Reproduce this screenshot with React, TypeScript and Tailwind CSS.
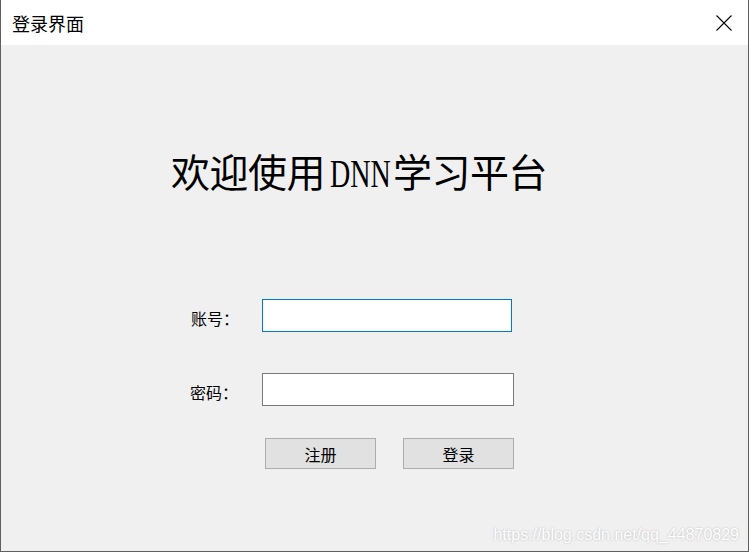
export default function App() {
  const cjk = { fontFamily: '"Noto Sans CJK SC", "Liberation Sans", sans-serif' };

  return (
    <div
      className="w-[749px] h-[552px] flex flex-col border-x border-b border-[#5f5f5f] bg-[#f0f0f0] overflow-hidden"
      style={cjk}
    >
      {/* title bar */}
      <div className="h-[45px] bg-white flex items-center justify-between pl-[11px] pr-[16px] shrink-0">
        <span className="text-[18px] leading-none text-black">登录界面</span>
        <svg width="16" height="16" viewBox="0 0 16 16" className="block">
          <path d="M0.5 0.5 L15.5 15.5 M15.5 0.5 L0.5 15.5" stroke="#000" strokeWidth="1.1" fill="none" />
        </svg>
      </div>

      {/* body */}
      <div className="relative flex-1">
        <h1 className="mt-[101px] h-[48px] pl-[170px] text-[39px] leading-[48px] font-normal text-black tracking-[-0.5px] whitespace-nowrap">
          欢迎使用
          <span className="inline-block w-[68px] pl-[5px] leading-none">
            <span
              className="inline-block origin-left scale-x-[0.72] tracking-normal"
              style={{ fontFamily: '"Liberation Serif", serif' }}
            >
              DNN
            </span>
          </span>
          学习平台
        </h1>

        <div className="mt-[105px] pl-[190px] flex flex-col">
          <div className="flex items-center">
            <label className="w-[71px] text-[16px] leading-none text-black mt-[4px]">账号：</label>
            <div className="w-[250px] h-[33px] bg-white border border-[#0078d7]" />
          </div>

          <div className="flex items-center mt-[41px]">
            <label className="w-[71px] -ml-[1px] text-[16px] leading-none text-black mt-[4px]">密码：</label>
            <div className="w-[252px] h-[33px] bg-white border border-[#7a7a7a] ml-[1px]" />
          </div>

          <div className="flex mt-[32px] pl-[74px] gap-[27px]">
            <button className="w-[111px] h-[31px] bg-[#e1e1e1] border border-[#adadad] text-[16px] leading-none text-black flex items-center justify-center">
              注册
            </button>
            <button className="w-[111px] h-[31px] bg-[#e1e1e1] border border-[#adadad] text-[16px] leading-none text-black flex items-center justify-center">
              登录
            </button>
          </div>
        </div>

        {/* watermark */}
        <span
          className="absolute right-[9px] bottom-[8px] text-[16px] leading-none text-white [text-shadow:0_0_2px_#b0b0b0] whitespace-nowrap"
          style={{ fontFamily: '"Liberation Sans", sans-serif' }}
        >
          https://blog.csdn.net/qq_44870829
        </span>
      </div>
    </div>
  );
}
